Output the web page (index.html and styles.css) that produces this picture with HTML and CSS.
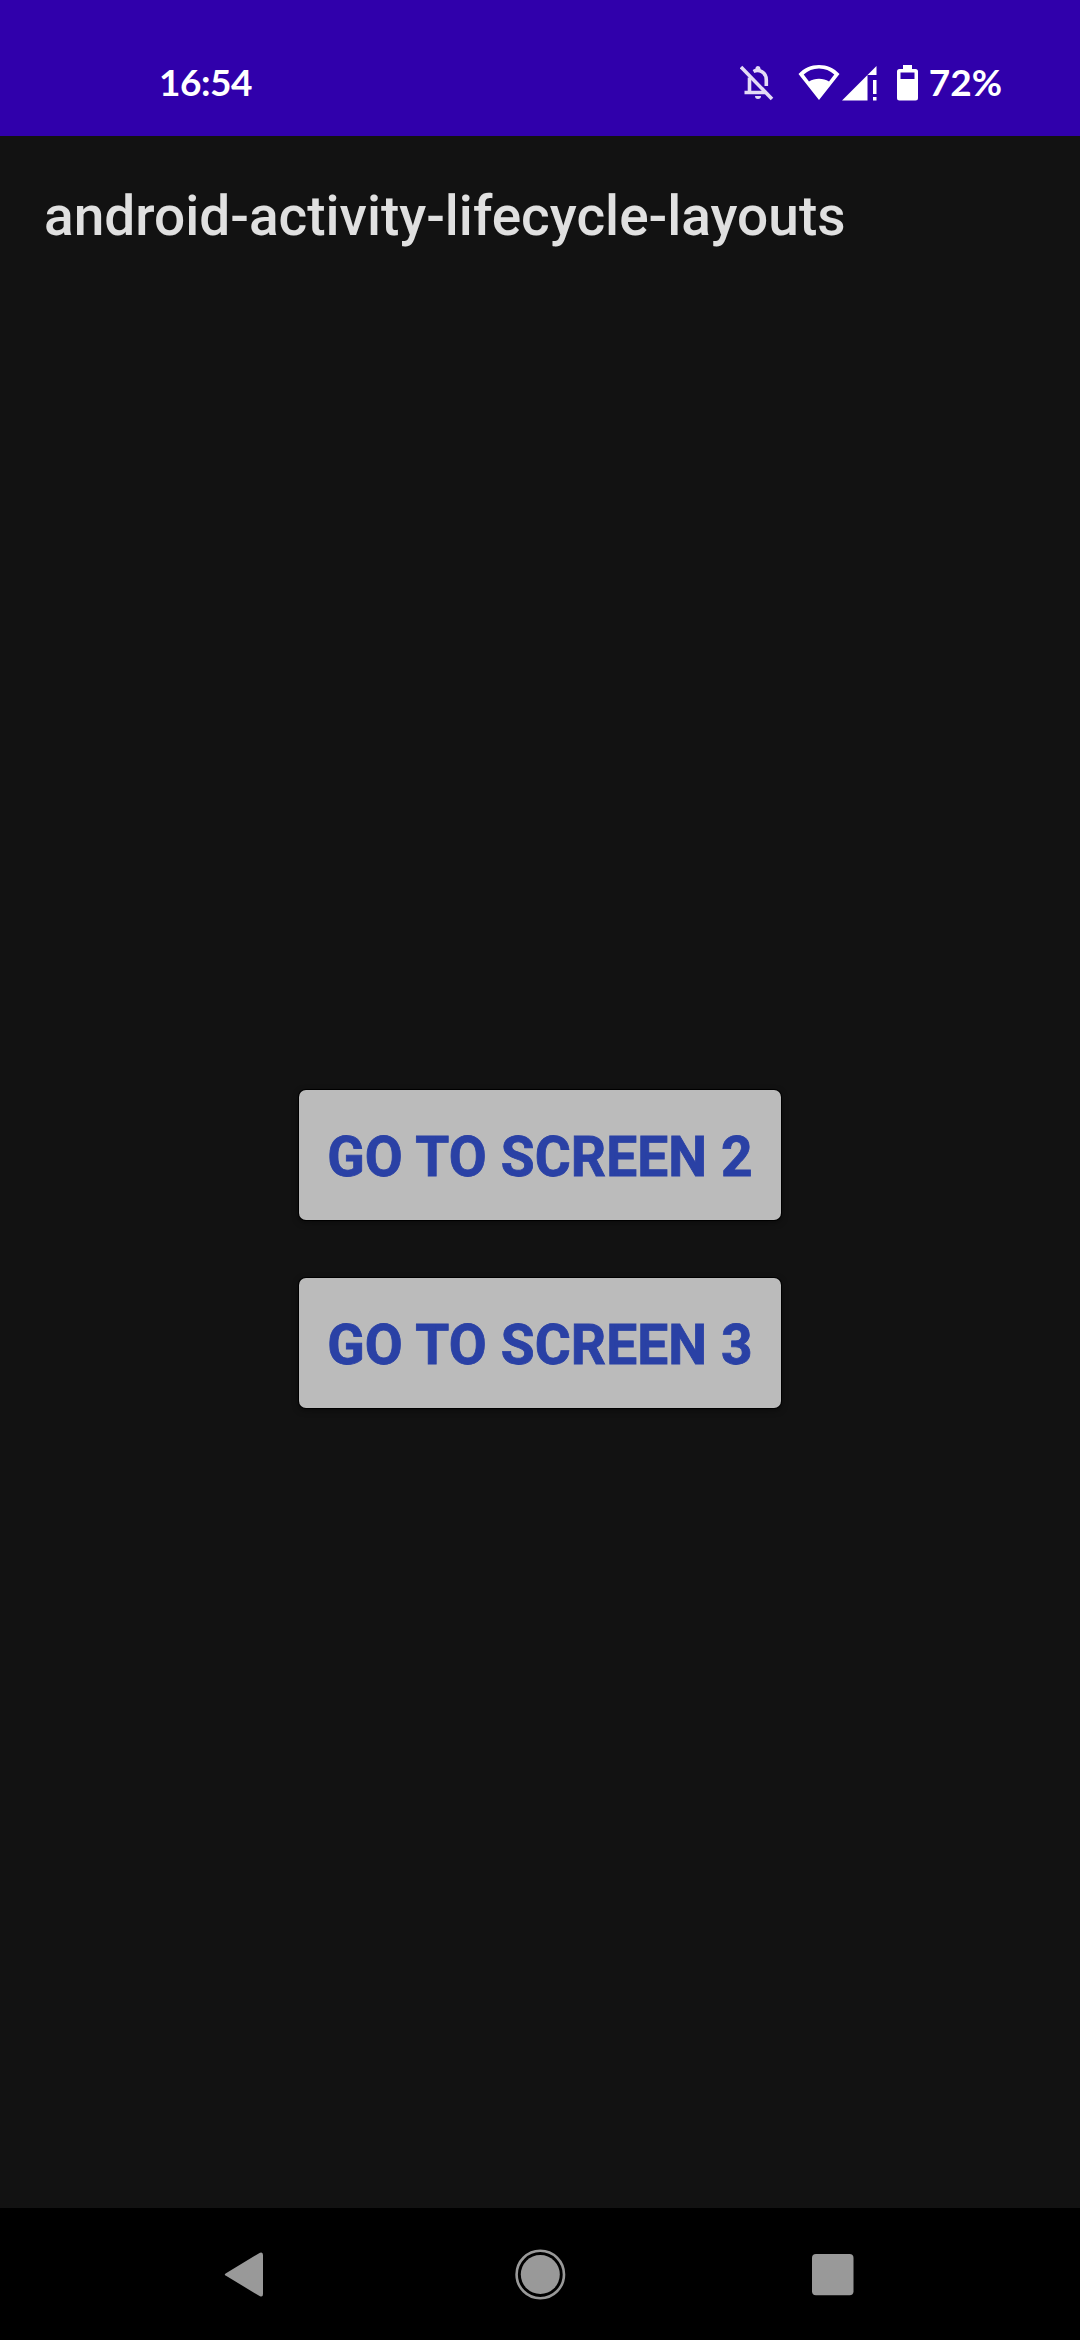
FILE: index.html
```html
<!DOCTYPE html>
<html lang="en">
<head>
<meta charset="utf-8">
<title>android-activity-lifecycle-layouts</title>
<link rel="stylesheet" href="styles.css">
</head>
<body>
<div class="screen">
  <header class="status-bar">
    <span class="clock">16:54</span>
    <div class="status-icons">
      <svg class="icon-bell" width="34" height="36" viewBox="0 0 34 36" fill="none" stroke="#e4dbf6" stroke-width="3.6">
        <path d="M1 2L32 34"/>
        <path d="M4.5 27.5H25M9.5 27V12.500M13.500 6.500C19 3.500 26.300 7.500 26.300 15V21"/>
        <path d="M15.500 5V3.500a2.500 2.500 0 0 1 5 0V5zM15 31h6a3 3 0 0 1-6 0z" fill="#e4dbf6" stroke="none"/>
      </svg>
      <svg class="icon-wifi" width="42" height="36" viewBox="0 0 42 36" fill="#fff">
        <path fill-rule="evenodd" d="M21 0C13 0 6 3 .5 9L21 35 41.500 9C36 3 29 0 21 0zM21 3.500C27 3.500 32 5.500 36.300 9.500L31 16.500C28 14.600 24.800 13.700 21 13.700S14 14.600 11 16.500L5.700 9.500C10 5.500 15 3.500 21 3.500z"/>
      </svg>
      <svg class="icon-signal" width="35" height="35" viewBox="0 0 35 35" fill="#fff">
        <path d="M0 34.500L34.500 0V9H25.500V34.500zM31 14h3.500v14H31zM31 31h3.500v3.500H31z"/>
      </svg>
      <svg class="icon-battery" width="21" height="36" viewBox="0 0 21 36" fill="#fff">
        <path fill-rule="evenodd" d="M6 0h9v4h3.500A2.500 2.500 0 0 1 21 6.500V33a2.500 2.500 0 0 1-2.500 2.500h-16A2.500 2.500 0 0 1 0 33V6.500A2.500 2.500 0 0 1 2.500 4H6zM3.500 7.500v6.500h14V7.500z"/>
      </svg>
      <span class="battery-level">72%</span>
    </div>
  </header>
  <h1 class="app-bar">android-activity-lifecycle-layouts</h1>
  <main class="content">
    <button class="nav-button">GO TO SCREEN 2</button>
    <button class="nav-button">GO TO SCREEN 3</button>
  </main>
  <nav class="system-nav">
    <svg width="52" height="52" viewBox="0 0 52 52" fill="#999">
      <path d="M8 24.200L42 3.700Q45 2.500 45 6V45Q45 48.500 42 47.300L8 26.800Q5.500 25.500 8 24.200z"/>
    </svg>
    <svg width="56" height="52" viewBox="0 0 56 52" fill="#999">
      <circle cx="30.300" cy="25.500" r="19.500"/>
      <circle cx="30.300" cy="25.500" r="23.700" fill="none" stroke="#999" stroke-width="2.600"/>
    </svg>
    <svg width="52" height="52" viewBox="0 0 52 52" fill="#999">
      <rect x="6" y="5" width="41.500" height="41.300" rx="4"/>
    </svg>
  </nav>
</div>
</body>
</html>
```
FILE: styles.css
```css
body {
  margin: 0;
  background: #121212;
}

.screen {
  display: flex;
  flex-direction: column;
  height: 2340px;
  font-family: Roboto, sans-serif;
}

.status-bar {
  display: flex;
  justify-content: space-between;
  align-items: center;
  box-sizing: border-box;
  height: 136px;
  padding: 30px 78px 0 159px;
  background: #3000ab;
  color: #fff;
  font-family: Lato, sans-serif;
  font-size: 37px;
  font-weight: 700;
  line-height: 44px;
}

.clock {
  padding-bottom: 3px;
  letter-spacing: -0.5px;
}

.status-icons {
  display: flex;
  align-items: center;
}

.icon-wifi {
  margin-left: 24px;
}

.icon-signal {
  margin-left: 2px;
}

.icon-battery {
  margin-left: 20px;
}

.battery-level {
  margin-left: 11px;
  padding-bottom: 3px;
}

.app-bar {
  box-sizing: border-box;
  height: 154px;
  margin: 0;
  padding: 3px 44px 0;
  color: #e0e0e0;
  font-size: 55px;
  font-weight: 500;
  line-height: 154px;
}

.content {
  display: flex;
  flex: 1;
  flex-direction: column;
  align-items: center;
  justify-content: center;
  gap: 58px;
}

.nav-button {
  width: 482px;
  height: 130px;
  padding: 3px 0 0;
  border: 0;
  border-radius: 7px;
  background: #bbb;
  box-shadow: 0 0 0 1px #000, 0 2px 6px rgba(0, 0, 0, 0.5);
  color: #2a41a5;
  font-family: inherit;
  font-size: 55px;
  font-weight: 700;
  letter-spacing: 0.15px;
  white-space: nowrap;
  -webkit-text-stroke: 0.8px #2a41a5;
}

.system-nav {
  display: flex;
  justify-content: space-between;
  align-items: center;
  box-sizing: border-box;
  height: 132px;
  padding: 2px 222px 0 218px;
  background: #000;
}
```
